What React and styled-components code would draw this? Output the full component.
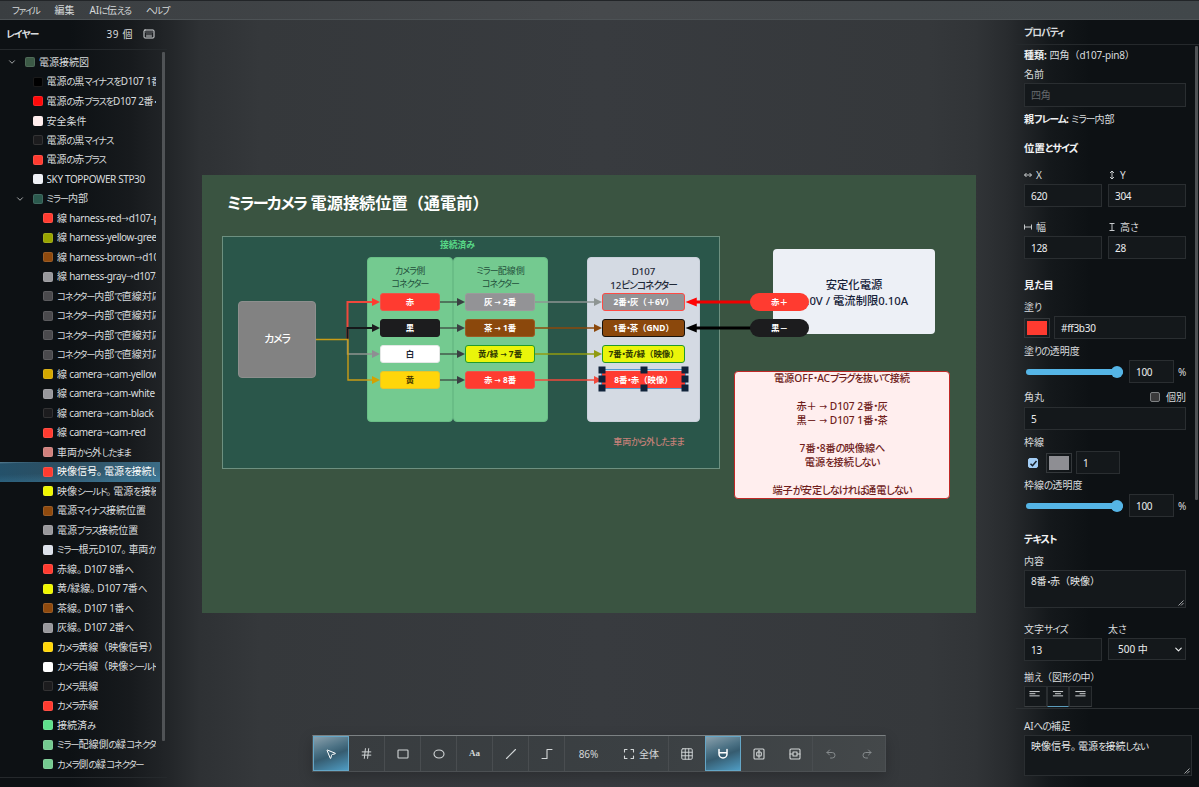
import React from 'react'
import styled, { createGlobalStyle, css } from 'styled-components'
import { Undo2, Redo2, Grid3x3, Hash, MousePointer2, Keyboard, ChevronDown } from 'lucide-react'

const GlobalStyle = createGlobalStyle`
    * { box-sizing: border-box; }
    body {
        margin: 0;
        overflow: hidden;
        background: #35383b;
        color: #d9dcde;
        font-family: "Noto Sans", "Noto Sans CJK JP", sans-serif;
        font-size: 10px;
        --kana: -0.09em;
        --kana-size: 0.97em;
        --latin: -0.02em;
    }
    input, textarea, select, button { font: inherit; color: inherit; }
`

const layers = [
    [0, '#3c5a46', '電源接続図', true],
    [1, '#000000', '電源の黒マイナスをD107 1番・茶へ'],
    [1, '#ff0a0a', '電源の赤プラスをD107 2番・灰へ'],
    [1, '#ffeeee', '安全条件'],
    [1, '#1c1c1e', '電源の黒マイナス'],
    [1, '#ff3b30', '電源の赤プラス'],
    [1, '#eef1f6', 'SKY TOPPOWER STP30'],
    [1, '#2b5a4e', 'ミラー内部', true],
    [2, '#ff3b30', '線 harness-red→d107-pin8'],
    [2, '#98a400', '線 harness-yellow-green→d107'],
    [2, '#8f4a0e', '線 harness-brown→d107-pin1'],
    [2, '#98989c', '線 harness-gray→d107-pin2'],
    [2, '#4a4a4d', 'コネクター内部で直線対応'],
    [2, '#4a4a4d', 'コネクター内部で直線対応'],
    [2, '#4a4a4d', 'コネクター内部で直線対応'],
    [2, '#4a4a4d', 'コネクター内部で直線対応'],
    [2, '#d4a800', '線 camera→cam-yellow'],
    [2, '#98989c', '線 camera→cam-white'],
    [2, '#1c1c1e', '線 camera→cam-black'],
    [2, '#ff3b30', '線 camera→cam-red'],
    [2, '#d0807c', '車両から外したまま'],
    [2, '#ff3b30', '映像信号。電源を接続しない'],
    [2, '#eef600', '映像シールド。電源を接続しない'],
    [2, '#8f4a0e', '電源マイナス接続位置'],
    [2, '#98989c', '電源プラス接続位置'],
    [2, '#dce1ea', 'ミラー根元D107。車両から外す'],
    [2, '#ff3b30', '赤線。D107 8番へ'],
    [2, '#eef600', '黄/緑線。D107 7番へ'],
    [2, '#8f4a0e', '茶線。D107 1番へ'],
    [2, '#98989c', '灰線。D107 2番へ'],
    [2, '#ffd60a', 'カメラ黄線（映像信号）'],
    [2, '#ffffff', 'カメラ白線（映像シールド）'],
    [2, '#1c1c1e', 'カメラ黒線'],
    [2, '#ff3b30', 'カメラ赤線'],
    [2, '#5fe08c', '接続済み'],
    [2, '#74ca90', 'ミラー配線側の緑コネクター'],
    [2, '#74ca90', 'カメラ側の緑コネクター'],
]

// かな・欧文・矢印で字間を変える
const Txt = ({ children }) => (
    <span>
        {children.split(/([\u3040-\u30ff]+|[\x20-\x7e]+|→|。)/).map((part, i) => {
            if (i % 2 === 0) return part
            if (part === '→') return <ArrowChar key={i}>{part}</ArrowChar>
            if (part === '。') return <Maru key={i}>{part}</Maru>
            return /[\u3040-\u30ff]/.test(part) ? <Kana key={i}>{part}</Kana> : <Latin key={i}>{part}</Latin>
        })}
    </span>
)

const Label = ({ children }) => <LabelText><Txt>{children}</Txt></LabelText>

const Menu = () => (
    <MenuBar>
        {['ファイル', '編集', 'AIに伝える', 'ヘルプ'].map(name => (
            <MenuItem key={name}><Txt>{name}</Txt></MenuItem>
        ))}
    </MenuBar>
)

const LayerPanel = () => (
    <Left>
        <LayerHeader>
            <b><Txt>レイヤー</Txt></b>
            <Count>39 個</Count>
            <Keyboard size={12} strokeWidth={2} />
        </LayerHeader>
        <Tree>
            <TreeRows>
                {layers.map(([level, color, name, open], i) => (
                    <LayerRow key={i} $level={level} $selected={i === 21}>
                        {open && <ChevronDown size={10} strokeWidth={1.8} />}
                        <Swatch $color={color} />
                        <LayerName><Txt>{name}</Txt></LayerName>
                    </LayerRow>
                ))}
            </TreeRows>
            <LeftThumb />
        </Tree>
    </Left>
)

// x, y, 幅, 塗り, 文字色, 枠, 文字
const pins = [
    [178, 118, 60, '#ff3b30', '#fff', '#e9564a', '赤'],
    [178, 144, 60, '#1c1c1e', '#fff', '#1c1c1e', '黒'],
    [178, 170, 60, '#ffffff', '#1f2937', '#e4e8e6', '白'],
    [178, 196, 60, '#ffd60a', '#4a3b00', '#e8c52a', '黄'],
    [263, 118, 70, '#939396', '#fff', '#9b9b9b', '灰 → 2番'],
    [263, 144, 70, '#8b480c', '#fff', '#9a5a22', '茶 → 1番'],
    [263, 170, 70, '#eaf50a', '#2f3a00', '#219a2c', '黄/緑 → 7番', 1.5],
    [263, 196, 70, '#ff3b30', '#fff', '#e9564a', '赤 → 8番'],
    [400, 118, 83, '#939396', '#fff', '#ff4a44', '2番・灰（＋6V）', 1.5],
    [400, 144, 83, '#8b480c', '#fff', '#18120c', '1番・茶（GND）', 1.5],
    [400, 170, 83, '#eaf50a', '#2f3a00', '#219a2c', '7番・黄/緑（映像）', 1.5],
    [400, 196, 83, '#ff3b30', '#fff', '#ff3b30', '8番・赤（映像）'],
]

const Head = ({ x, y, color, left, s = 4 }) => (
    <path d={left ? `M${x} ${y}l${s * 2.5} ${-s}v${s * 2}z` : `M${x} ${y}l${-s * 2} ${-s}v${s * 2}z`} fill={color} />
)

const Wires = () => (
    <WireLayer width="774" height="438" fill="none" strokeWidth="1.4">
        <path d="M145.500 165V127H170" stroke="#f0483c" strokeWidth="2" />
        <path d="M145.500 165V153H170" stroke="#16181a" strokeWidth="2" />
        <path d="M145.500 165V179H170" stroke="#8e9490" />
        <path d="M114 164.500H146V205H170" stroke="#c99c16" />
        <Head x={178} y={127} color="#ff3b30" />
        <Head x={178} y={153} color="#1c1c1e" />
        <Head x={178} y={179} color="#8e8e93" />
        <Head x={178} y={205} color="#d4a200" />
        {[127, 153, 179, 205].map(y => (
            <g key={y}>
                <path d={`M238 ${y}H256`} stroke="#3f5147" />
                <Head x={263} y={y} color="#3a3f42" />
            </g>
        ))}
        {[[127, '#8e9593'], [153, '#8b480c'], [179, '#919b10'], [205, '#f0483c']].map(([y, color]) => (
            <g key={y}>
                <path d={`M333 ${y}H393`} stroke={color} />
                <Head x={400} y={y} color={color} />
            </g>
        ))}
        <path d="M492 127H550" stroke="#f00000" strokeWidth="3" />
        <path d="M492 153H550" stroke="#000" strokeWidth="3" />
        <Head x={483.500} y={127} color="#ff0505" left s={4.500} />
        <Head x={483.500} y={153} color="#000" left s={4.500} />
    </WireLayer>
)

const Diagram = () => (
    <Page>
        <Title><Txt>ミラーカメラ 電源接続位置（通電前）</Txt></Title>
        <MirrorFrame />
        <Note $x={205} $y={63} $w={100} $color="#58d886" $bold><Txt>接続済み</Txt></Note>
        <Camera><Txt>カメラ</Txt></Camera>
        <Connector $x={165} $w={86}><Txt>カメラ側</Txt><Txt>コネクター</Txt></Connector>
        <Connector $x={251} $w={95}><Txt>ミラー配線側</Txt><Txt>コネクター</Txt></Connector>
        <Connector $x={385} $w={113} $gray><Txt>D107</Txt><Txt>12ピンコネクター</Txt></Connector>
        <Note $x={386} $y={260} $w={121} $color="#c58078"><Txt>車両から外したまま</Txt></Note>
        <Supply><Txt>安定化電源</Txt><Txt>6.0V / 電流制限0.10A</Txt></Supply>
        <Wires />
        {pins.map(([x, y, w, bg, color, line, text, lw]) => (
            <Pin key={text} $x={x} $y={y} $w={w} $bg={bg} $color={color} $line={line} $lw={lw || 1}>
                <Txt>{text}</Txt>
            </Pin>
        ))}
        <Terminal $y={118} $bg="#ff3b30">赤＋</Terminal>
        <Terminal $y={144} $bg="#1c1c1e">黒－</Terminal>
        <Warning>
            <p><Txt>電源OFF・ACプラグを抜いて接続</Txt></p>
            <p />
            <p><Txt>赤＋ → D107 2番・灰</Txt></p>
            <p><Txt>黒－ → D107 1番・茶</Txt></p>
            <p />
            <p><Txt>7番・8番の映像線へ</Txt></p>
            <p><Txt>電源を接続しない</Txt></p>
            <p />
            <p><Txt>端子が安定しなければ通電しない</Txt></p>
        </Warning>
        <Selection>
            {[[0, 0], [50, 0], [100, 0], [0, 50], [100, 50], [0, 100], [50, 100], [100, 100]].map(([x, y]) => (
                <Handle key={`${x}-${y}`} $x={x} $y={y} />
            ))}
        </Selection>
    </Page>
)

const Icon = ({ children, size = 14 }) => (
    <svg width={size} height={size} viewBox="0 0 14 14" fill="none" stroke="currentColor" strokeWidth="1.1" strokeLinecap="round" strokeLinejoin="round">
        {children}
    </svg>
)

const Toolbar = () => (
    <Tools>
        <Tool $active><MousePointer2 size={12} /></Tool>
        <Tool $line><Hash size={13} strokeWidth={1.8} /></Tool>
        <Tool $line><Icon><rect x="2" y="3" width="10" height="8" rx=".8" /></Icon></Tool>
        <Tool $line><Icon><ellipse cx="7" cy="7" rx="5" ry="4" /></Icon></Tool>
        <Tool $line><Aa>Aa</Aa></Tool>
        <Tool $line><Icon><path d="M2.500 11.500l9-9" /></Icon></Tool>
        <Tool $line><Icon><path d="M2 11.500h5v-9h5" /></Icon></Tool>
        <Tool $w={48}>86%</Tool>
        <Tool $w={56} $line>
            <Icon><path d="M2.500 5V2.500H5M9 2.500h2.500V5M11.500 9v2.500H9M5 11.500H2.500V9" /></Icon>
            全体
        </Tool>
        <Tool><Grid3x3 size={14} strokeWidth={1.6} /></Tool>
        <Tool $active>
            <Icon><path strokeWidth="1.5" d="M3 2.500V7a4 4 0 0 0 8 0V2.500M3 5.800h8" /></Icon>
        </Tool>
        <Tool>
            <Icon><rect x="2" y="2" width="10" height="10" rx="1" /><path d="M7 3.200v7.600" /><rect x="4.700" y="5" width="4.600" height="4" rx="1" /></Icon>
        </Tool>
        <Tool $line>
            <Icon><rect x="2" y="2" width="10" height="10" rx="1" /><path d="M2 7h2.500M9.500 7H12" /><rect x="5" y="5" width="4" height="4" /></Icon>
        </Tool>
        <Tool $dim><Undo2 size={12} strokeWidth={2} /></Tool>
        <Tool $dim><Redo2 size={12} strokeWidth={2} /></Tool>
    </Tools>
)

const Arrow = ({ d }) => (
    <svg width="8" height="10" viewBox="0 0 8 10" fill="none" stroke="currentColor" strokeWidth=".9"><path d={d} /></svg>
)

const Grip = () => (
    <GripIcon width="6" height="6" stroke="#c4c7c9" strokeWidth=".8"><path d="M.5 5.500l5-5M3 5.500L5.500 3" /></GripIcon>
)

const Opacity = ({ label, gap }) => (
    <Field $gap={gap}>
        <Label>{label}</Label>
        <Row $gap={5}>
            <Slider><Knob /></Slider>
            <Input $w={45}>100</Input>
            <Percent>%</Percent>
        </Row>
    </Field>
)

const Properties = () => (
    <Right>
        <PanelTitle><Txt>プロパティ</Txt></PanelTitle>
        <PropScroll>
            <PropBody>
                <Meta $h={20}><b>種類:</b> <Txt>四角（d107-pin8）</Txt></Meta>
                <Field>
                    <Label>名前</Label>
                    <Input $h={24} $placeholder>四角</Input>
                </Field>
                <Meta $h={24}><b><Txt>親フレーム:</Txt></b> <Txt>ミラー内部</Txt></Meta>
                <Heading $gap={7}><Txt>位置とサイズ</Txt></Heading>
                <Row $gap={6}>
                    <Field $gap={8}>
                        <LabelText><Arrow d="M.5 5h7M2.500 3l-2 2 2 2M5.500 3l2 2-2 2" /> X</LabelText>
                        <Input>620</Input>
                    </Field>
                    <Field $gap={8}>
                        <LabelText><Arrow d="M4 1v8M2 3l2-2 2 2M2 7l2 2 2-2" /> Y</LabelText>
                        <Input>304</Input>
                    </Field>
                </Row>
                <Row $gap={6}>
                    <Field $gap={11}>
                        <LabelText><Arrow d="M.5 2.500v5M7.500 2.500v5M.5 5h7" /> 幅</LabelText>
                        <Input>128</Input>
                    </Field>
                    <Field $gap={11}>
                        <LabelText><Arrow d="M1.500 1.500h5M1.500 8.500h5M4 1.500v7" /> <Txt>高さ</Txt></LabelText>
                        <Input>28</Input>
                    </Field>
                </Row>
                <Heading $gap={16}><Txt>見た目</Txt></Heading>
                <Field $gap={3}>
                    <Label>塗り</Label>
                    <Row $gap={4}>
                        <ColorBox $color="#ff3b30" />
                        <Input>#ff3b30</Input>
                    </Row>
                </Field>
                <Opacity label="塗りの透明度" gap={3} />
                <Field $gap={5}>
                    <Row>
                        <Label>角丸</Label>
                        <Individual><Check />個別</Individual>
                    </Row>
                    <Input $top={1}>5</Input>
                </Field>
                <Field $gap={3}>
                    <Label>枠線</Label>
                    <Row $gap={4}>
                        <CheckWrap>
                            <Check $on>
                                <svg width="9" height="9" viewBox="0 0 9 9" fill="none" stroke="#17202a" strokeWidth="1.5"><path d="M1.500 4.700l2 2L7.500 2" /></svg>
                            </Check>
                        </CheckWrap>
                        <ColorBox $color="#8e8e93" />
                        <Input $w={44}>1</Input>
                    </Row>
                </Field>
                <Opacity label="枠線の透明度" gap={2} />
                <Heading $gap={12}><Txt>テキスト</Txt></Heading>
                <Field $gap={3}>
                    <Label>内容</Label>
                    <Area $h={38}><Txt>8番・赤（映像）</Txt><Grip /></Area>
                </Field>
                <Row $gap={6}>
                    <Field $gap={12}>
                        <Label>文字サイズ</Label>
                        <Input>13</Input>
                    </Field>
                    <Field $gap={11}>
                        <Label>太さ</Label>
                        <Select>500 中<ChevronDown size={11} strokeWidth={2.5} /></Select>
                    </Field>
                </Row>
                <Field $gap={7}>
                    <Label>揃え（図形の中）</Label>
                    <Row>
                        <AlignButton><Icon size={12}><path d="M1 3h11M1 5.500h6M1 8h11" /></Icon></AlignButton>
                        <AlignButton $active><Icon size={12}><path d="M1.500 3h11M4 5.500h6M1.500 8h11" /></Icon></AlignButton>
                        <AlignButton><Icon size={12}><path d="M2 3h11M7 5.500h6M2 8h11" /></Icon></AlignButton>
                    </Row>
                </Field>
            </PropBody>
            <RightThumb />
        </PropScroll>
        <AiNote>
            <Label>AIへの補足</Label>
            <Area $h={41}><Txt>映像信号。電源を接続しない</Txt><Grip /></Area>
        </AiNote>
    </Right>
)

const App = () => {
    return (
        <Shell>
            <GlobalStyle />
            <Menu />
            <Main>
                <LayerPanel />
                <Canvas>
                    <Diagram />
                    <Toolbar />
                </Canvas>
                <Properties />
            </Main>
        </Shell>
    )
}

export default App

const Kana = styled.span`
    font-size: var(--kana-size);
    font-feature-settings: "palt";
    letter-spacing: var(--kana);
`
const Latin = styled.span`
    letter-spacing: var(--latin);
`
const ArrowChar = styled.span`
    font-size: .75em;
`
const Maru = styled.span`
    margin-right: 0.2em;
    font-feature-settings: "halt";
`

const Shell = styled.div`
    display: flex;
    flex-direction: column;
    width: 1199px;
    height: 787px;
    line-height: 1;
    white-space: nowrap;
`

const MenuBar = styled.header`
    display: flex;
    align-items: center;
    gap: 15px;
    height: 20px;
    flex-shrink: 0;
    padding-left: 12px;
    background: linear-gradient(100deg, #3a3e41, #46494c 50%, #41474a);
    border-top: 1px solid #222528;
    border-bottom: 1px solid #4d5255;
    --kana: -0.13em;
    --kana-size: 0.94em;
`
const MenuItem = styled.span`
    color: #d6d9da;
`

const Main = styled.div`
    display: flex;
    flex: 1;
    min-height: 0;
    background: linear-gradient(90deg, #0d1114 0, #0d1114 70px, #171a1d 130px, #222528 168px, #2e3134 200px, #35383b 260px, #383b3f 600px, #35383b 930px, #313437 976px, #282b2e 1008px, #14181b 1050px, #0d1114 1090px, #0d1114);
`

const Left = styled.aside`
    display: flex;
    flex-direction: column;
    width: 167px;
`
const LayerHeader = styled.div`
    display: flex;
    align-items: center;
    height: 30px;
    flex-shrink: 0;
    padding: 0 12px 1px 6px;
    border-bottom: 1px solid #25292c;
    b { flex: 1; }
`
const Count = styled.span`
    margin-right: 10px;
    letter-spacing: 0.6px;
`
const Tree = styled.div`
    display: flex;
    height: 728px;
    padding-top: 2.700px;
    border-bottom: 1px solid #25292c;
`
const TreeRows = styled.div`
    width: 160px;
    margin-right: 2px;
    --kana: -0.13em;
    --kana-size: 0.94em;
    --latin: -0.038em;
`
const LayerRow = styled.div`
    display: flex;
    align-items: center;
    height: 19.500px;
    padding-right: 4px;
    padding-left: ${p => [25, 32.500, 43][p.$level]}px;
    svg {
        margin-left: -18px;
        margin-right: 8px;
        flex-shrink: 0;
    }
    ${p => p.$selected && css`
        color: #fff;
        background: linear-gradient(178deg, #5a7f93 0, transparent 8%, transparent 50%, rgba(70, 150, 190, .4)), linear-gradient(90deg, #24516a, #2e4e60 45%, #3b6c86);
    `}
`
const Swatch = styled.i`
    width: 10px;
    height: 10px;
    flex-shrink: 0;
    margin-right: 4px;
    border-radius: 2px;
    border: 1px solid rgba(255, 255, 255, .1);
    background: ${p => p.$color};
    background-clip: border-box;
`
const LayerName = styled.span`
    flex: 1;
    min-width: 0;
    line-height: 18px;
    overflow: hidden;
`
const LeftThumb = styled.i`
    width: 3px;
    height: 689px;
    margin-top: -1px;
    border-radius: 1px;
    background: #505356;
`

const Canvas = styled.main`
    display: flex;
    flex-direction: column;
    width: 849px;
    padding: 155px 0 0 35px;
`
const Page = styled.div`
    position: relative;
    width: 774px;
    height: 438px;
    background: #3a5441;
    font-weight: 500;
    --kana: -0.1em;
    --kana-size: 1em;
    --latin: 0;
`
const at = css`
    position: absolute;
    left: ${p => p.$x}px;
    top: ${p => p.$y}px;
    width: ${p => p.$w}px;
`
const Title = styled.h1`
    margin: 0;
    padding: 20px 25px;
    font-size: 16.200px;
    line-height: 17px;
    font-weight: 600;
    color: #fff;
`
const MirrorFrame = styled.div`
    position: absolute;
    left: 20px;
    top: 61px;
    width: 498px;
    height: 233px;
    background: #2a564a;
    border: 1px solid #6d9080;
`
const Note = styled.div`
    ${at}
    text-align: center;
    line-height: 14px;
    font-size: ${p => p.$bold ? 8.800 : 9}px;
    font-weight: ${p => p.$bold ? 700 : 500};
    color: ${p => p.$color};
`
const Camera = styled.div`
    position: absolute;
    left: 36px;
    top: 126px;
    width: 78px;
    height: 77px;
    display: grid;
    place-items: center;
    border-radius: 4px;
    border: 1px solid #8d8f8e;
    background: #828282;
    color: #fff;
    font-size: 10.800px;
`
const Connector = styled.div`
    ${at}
    top: 82px;
    height: 165px;
    display: flex;
    flex-direction: column;
    align-items: center;
    padding-top: 7px;
    border-radius: 4px;
    border: 1px solid ${p => p.$gray ? '#c9d0da' : '#69bd86'};
    background: ${p => p.$gray ? '#d4dae3' : '#74ca90'};
    color: ${p => p.$gray ? '#1f2937' : '#23503c'};
    font-size: ${p => p.$gray ? 9.700 : 9}px;
    font-weight: ${p => p.$gray ? 500 : 400};
    line-height: ${p => p.$gray ? 14 : 12.500}px;
`
const Pin = styled.div`
    ${at}
    height: 18px;
    display: grid;
    place-items: center;
    border: ${p => p.$lw}px solid ${p => p.$line};
    border-radius: 3px;
    background: ${p => p.$bg};
    color: ${p => p.$color};
    font-size: 8.400px;
    font-weight: 700;
`
const Terminal = styled.div`
    position: absolute;
    left: 548px;
    top: ${p => p.$y}px;
    width: 59px;
    height: 18px;
    display: grid;
    place-items: center;
    border-radius: 9px;
    background: ${p => p.$bg};
    color: #fff;
    font-size: 8.500px;
    font-weight: 700;
`
const Supply = styled.div`
    position: absolute;
    left: 571px;
    top: 74px;
    width: 162px;
    height: 85px;
    display: flex;
    flex-direction: column;
    align-items: center;
    justify-content: center;
    padding-top: 2px;
    border-radius: 4px;
    background: #edf0f6;
    color: #17233a;
    font-size: 11.300px;
    line-height: 15.500px;
`
const Warning = styled.div`
    position: absolute;
    left: 532px;
    top: 196px;
    width: 216px;
    height: 128px;
    display: flex;
    flex-direction: column;
    align-items: center;
    justify-content: center;
    border: 1.500px solid #c02826;
    border-radius: 4px;
    background: #ffeeee;
    color: #6f1d1b;
    font-size: 10.200px;
    line-height: 13.900px;
    p {
        margin: 0;
        height: 13.900px;
    }
`
const WireLayer = styled.svg`
    position: absolute;
    inset: 0;
`
const Selection = styled.div`
    position: absolute;
    left: 399px;
    top: 194px;
    width: 85px;
    height: 20px;
    border: 1px solid #559bd0;
`
const Handle = styled.i`
    position: absolute;
    left: ${p => p.$x}%;
    top: ${p => p.$y}%;
    width: 7px;
    height: 7px;
    transform: translate(-50%, -50%);
    background: #10233a;
`

const Tools = styled.div`
    display: flex;
    width: 574px;
    height: 37px;
    margin: 122px 0 0 110px;
    background: linear-gradient(100deg, #383c3f, #3b4043 60%, #44484a);
    border: 1px solid #4c5053;
    border-top-color: #7c8183;
    box-shadow: 0 5px 14px rgba(0, 0, 0, .22);
`
const Tool = styled.button`
    display: flex;
    align-items: center;
    justify-content: center;
    gap: 3px;
    flex: 0 0 auto;
    width: ${p => p.$w || 36}px;
    padding: 0;
    border: 0;
    border-right: 1px solid ${p => p.$line ? '#494d50' : 'transparent'};
    background: none;
    color: ${p => p.$dim ? '#868b8d' : '#d3d7d8'};
    ${p => p.$active && css`
        color: #fff;
        border: 1px solid #65a6c6;
        background: linear-gradient(160deg, #8aa0ac 0, #4b7184 38%, #365c70 55%, #4f9cc3 100%);
    `}
`
const Aa = styled.span`
    font-family: "Liberation Serif", serif;
    font-size: 9px;
    font-weight: 700;
`

const Right = styled.aside`
    width: 183px;
    display: flex;
    flex-direction: column;
`
const PanelTitle = styled.div`
    height: 25px;
    flex-shrink: 0;
    padding-left: 8px;
    line-height: 24px;
    font-weight: 700;
    border-bottom: 1px solid #25292c;
`
const PropScroll = styled.div`
    display: flex;
    height: 664px;
    overflow: hidden;
    border-bottom: 1px solid #2c3033;
`
const PropBody = styled.div`
    width: 162px;
    margin-left: 8px;
    margin-right: 9px;
`
const RightThumb = styled.i`
    width: 3px;
    height: 454px;
    margin-top: 1px;
    border-radius: 1px;
    background: #505356;
`
const Meta = styled.div`
    height: ${p => p.$h}px;
    line-height: ${p => p.$h}px;
    b { color: #eef0f1; }
`
const Heading = styled.div`
    margin-top: ${p => p.$gap}px;
    height: 20px;
    line-height: 20px;
    font-size: 10.400px;
    font-weight: 700;
    color: #f2f3f4;
`
const Field = styled.div`
    flex: 1;
    margin-top: ${p => p.$gap || 0}px;
`
const LabelText = styled.div`
    display: flex;
    align-items: center;
    gap: 4px;
    height: 18px;
    flex: 1;
`
const Row = styled.div`
    display: flex;
    align-items: center;
    gap: ${p => p.$gap || 0}px;
`
const box = css`
    background: #14181b;
    border: 1px solid #2a2e31;
`
const Input = styled.div`
    ${box}
    display: flex;
    align-items: center;
    height: ${p => p.$h || 23}px;
    margin-top: ${p => p.$top || 0}px;
    flex: ${p => p.$w ? `0 0 ${p.$w}px` : 1};
    padding-left: 6px;
    letter-spacing: -0.03em;
    color: ${p => p.$placeholder ? '#65696c' : '#eceeef'};
`
const Area = styled.div`
    ${box}
    position: relative;
    height: ${p => p.$h}px;
    padding: 5px 6px;
    color: #e6e8e9;
    --kana: -0.13em;
    --kana-size: 0.94em;
`
const GripIcon = styled.svg`
    position: absolute;
    right: 1px;
    bottom: 1px;
`
const Select = styled.div`
    ${box}
    display: flex;
    align-items: center;
    justify-content: space-between;
    height: 22px;
    padding: 0 1px 0 9px;
    color: #eceeef;
`
const ColorBox = styled.i`
    width: 26px;
    height: 20px;
    flex-shrink: 0;
    border: 1px solid #34383b;
    background: ${p => p.$color} content-box;
    padding: 2px;
`
const Slider = styled.div`
    display: flex;
    align-items: center;
    justify-content: flex-end;
    width: 97px;
    height: 6px;
    margin: 0 1px 0 2px;
    border-radius: 3px;
    background: #55b5e6;
`
const Knob = styled.i`
    width: 12px;
    height: 12px;
    border-radius: 50%;
    background: #55b5e6;
`
const Percent = styled.span`
    width: 8px;
    margin-left: -1px;
`
const Individual = styled.span`
    display: flex;
    align-items: center;
    gap: 6px;
`
const Check = styled.i`
    display: grid;
    place-items: center;
    width: 10px;
    height: 10px;
    border-radius: 2px;
    border: 1px solid ${p => p.$on ? '#a3cdf5' : '#7e8183'};
    background: ${p => p.$on ? '#a3cdf5' : '#3a3a3b'};
`
const CheckWrap = styled.span`
    width: 18px;
    padding-left: 4px;
`
const AlignButton = styled.button`
    ${box}
    display: flex;
    justify-content: center;
    width: 22.500px;
    height: 20.500px;
    padding: 2px 0 0;
    border-bottom: 1.500px solid ${p => p.$active ? '#5c9dbd' : '#3a3e41'};
`
const AiNote = styled.div`
    padding: 8px 7px 0 8px;
`
